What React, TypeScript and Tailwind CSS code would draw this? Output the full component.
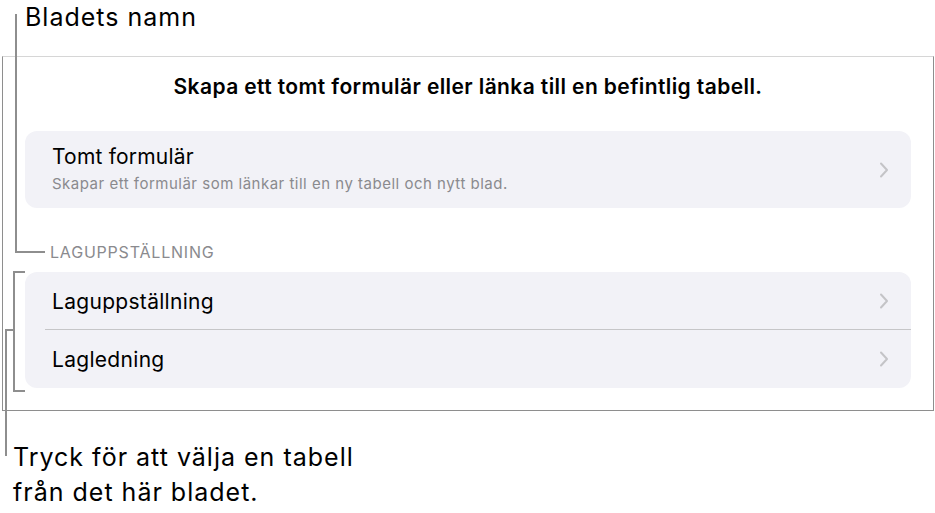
import React from "react";

const font = { fontFamily: "Inter, 'Noto Sans', sans-serif" };

function Chevron() {
  return (
    <svg width="10" height="16" viewBox="0 0 10 16" className="shrink-0">
      <path d="M2 1.5 L8 8 L2 14.5" fill="none" stroke="#c4c4c7" strokeWidth="2" strokeLinecap="round" strokeLinejoin="round" />
    </svg>
  );
}

function Row({ title, last }: { title: string; last?: boolean }) {
  return (
    <div className="flex h-[58px] items-center pl-[27px] pr-[22px] relative">
      <span className="flex-1 pt-[2px] text-[21px] leading-[24px] tracking-[0.3px] text-black">{title}</span>
      <Chevron />
      {!last && <div className="absolute left-[20px] right-0 bottom-0 h-px bg-[#c6c6c8]" />}
    </div>
  );
}

export default function App() {
  return (
    <div className="relative w-[935px] h-[513px] bg-white overflow-hidden" style={font}>
      {/* callout lines */}
      <div className="absolute left-[15px] top-[14px] w-[2px] h-[239px] bg-[#8e8e8e]" />
      <div className="absolute left-[15px] top-[251px] w-[30px] h-[2px] bg-[#8e8e8e]" />
      <div className="absolute left-[13px] top-[271px] w-[2px] h-[121px] bg-[#8e8e8e]" />
      <div className="absolute left-[13px] top-[271px] w-[12px] h-[2px] bg-[#8e8e8e]" />
      <div className="absolute left-[13px] top-[390px] w-[12px] h-[2px] bg-[#8e8e8e]" />
      <div className="absolute left-[5px] top-[329px] w-[2px] h-[127px] bg-[#8e8e8e]" />
      <div className="absolute left-[5px] top-[329px] w-[10px] h-[2px] bg-[#8e8e8e]" />

      <div className="h-[56px] pl-[25px] pt-[2px] text-[25px] leading-[30px] tracking-[1px] text-black">Bladets namn</div>

      <div className="ml-[2px] w-[932px] h-[355px] border-l border-r border-b border-[#8e8e8e] border-t border-t-[#d6d6d6] flex flex-col">
        <div className="pt-[18px] text-center text-[21px] leading-[24px] tracking-[0.4px] font-semibold text-black">
          Skapa ett tomt formulär eller länka till en befintlig tabell.
        </div>

        <div className="mx-[22px] mt-[32px] h-[77px] rounded-[12px] bg-[#f2f2f7] flex items-center pl-[27px] pr-[22px]">
          <div className="flex-1 pb-[1px]">
            <div className="text-[21px] leading-[24px] tracking-[0.2px] text-black">Tomt formulär</div>
            <div className="mt-[6px] text-[15px] leading-[18px] tracking-[0.5px] text-[#8a8a8e]">
              Skapar ett formulär som länkar till en ny tabell och nytt blad.
            </div>
          </div>
          <Chevron />
        </div>

        <div className="mt-[35px] pl-[47px] text-[16px] leading-[18px] tracking-[0.8px] text-[#8a8a8e] uppercase">Laguppställning</div>

        <div className="mx-[22px] mt-[11px] rounded-[12px] bg-[#f2f2f7] flex flex-col">
          <Row title="Laguppställning" />
          <Row title="Lagledning" last />
        </div>
      </div>

      <div className="pl-[13px] pt-[29px] text-[25px] leading-[35px] tracking-[1px] text-black">
        Tryck för att välja en tabell
        <br />
        från det här bladet.
      </div>
    </div>
  );
}
